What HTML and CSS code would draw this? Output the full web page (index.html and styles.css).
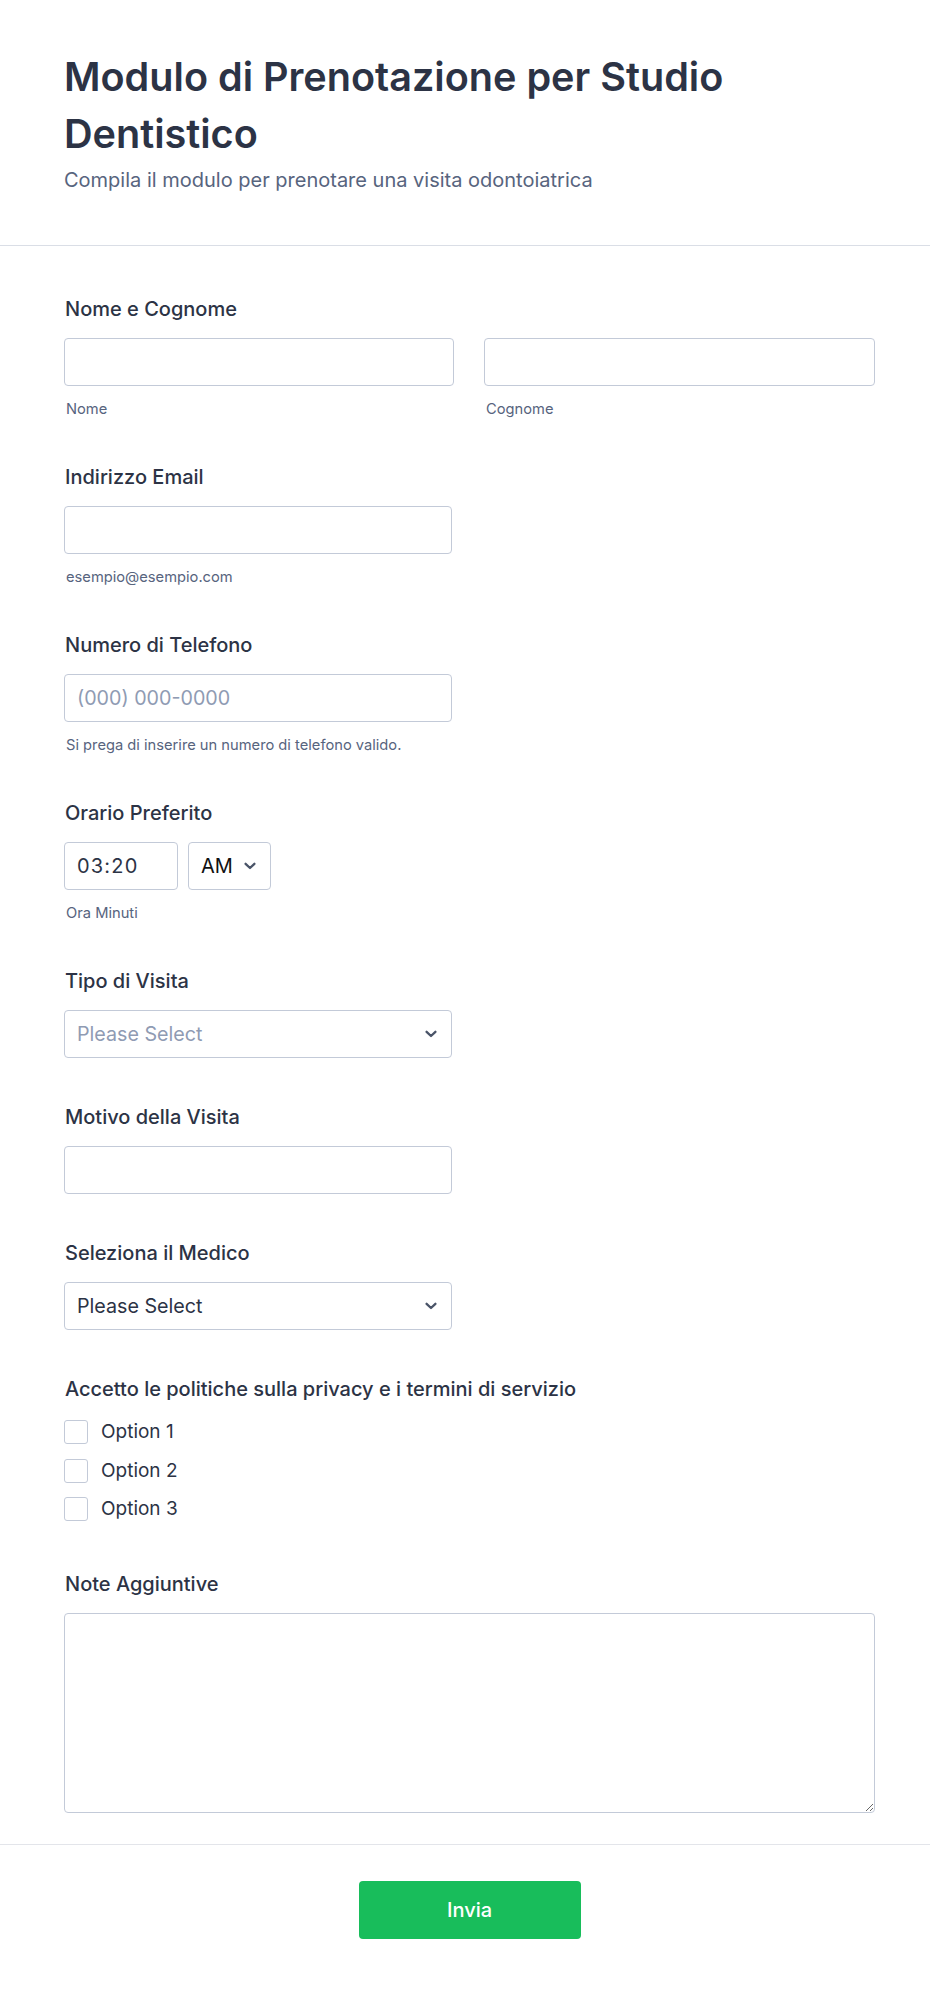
FILE: index.html
```html
<!DOCTYPE html>
<html lang="it">
<head>
<meta charset="utf-8">
<title>Modulo di Prenotazione per Studio Dentistico</title>
<link rel="stylesheet" href="styles.css">
</head>
<body>
<div class="form">
  <header class="form-header">
    <h1 class="form-title">Modulo di Prenotazione per Studio Dentistico</h1>
    <p class="form-subtitle">Compila il modulo per prenotare una visita odontoiatrica</p>
  </header>

  <main class="form-body">
    <div class="field">
      <label class="field-label">Nome e Cognome</label>
      <div class="name-row">
        <div class="sub">
          <input class="input" type="text">
          <span class="sublabel">Nome</span>
        </div>
        <div class="sub">
          <input class="input" type="text">
          <span class="sublabel">Cognome</span>
        </div>
      </div>
    </div>

    <div class="field">
      <label class="field-label">Indirizzo Email</label>
      <input class="input half" type="email">
      <span class="sublabel">esempio@esempio.com</span>
    </div>

    <div class="field">
      <label class="field-label">Numero di Telefono</label>
      <input class="input half" type="tel" placeholder="(000) 000-0000">
      <span class="sublabel">Si prega di inserire un numero di telefono valido.</span>
    </div>

    <div class="field">
      <label class="field-label">Orario Preferito</label>
      <div class="time-row">
        <div class="input time-box">03:20</div>
        <div class="input ampm-box">
          <span>AM</span>
          <svg class="chev" width="12" height="8" viewBox="0 0 12 8"><path d="M1.6 1.8 L6 6 L10.4 1.8" fill="none" stroke="#4a5468" stroke-width="2.3" stroke-linecap="round" stroke-linejoin="round"/></svg>
        </div>
      </div>
      <span class="sublabel">Ora Minuti</span>
    </div>

    <div class="field">
      <label class="field-label">Tipo di Visita</label>
      <div class="input half select">
        <span class="placeholder">Please Select</span>
        <svg class="chev" width="12" height="8" viewBox="0 0 12 8"><path d="M1.6 1.8 L6 6 L10.4 1.8" fill="none" stroke="#4a5468" stroke-width="2.3" stroke-linecap="round" stroke-linejoin="round"/></svg>
      </div>
    </div>

    <div class="field">
      <label class="field-label">Motivo della Visita</label>
      <input class="input half" type="text">
    </div>

    <div class="field">
      <label class="field-label">Seleziona il Medico</label>
      <div class="input half select">
        <span class="value">Please Select</span>
        <svg class="chev" width="12" height="8" viewBox="0 0 12 8"><path d="M1.6 1.8 L6 6 L10.4 1.8" fill="none" stroke="#4a5468" stroke-width="2.3" stroke-linecap="round" stroke-linejoin="round"/></svg>
      </div>
    </div>

    <div class="field field-options">
      <label class="field-label">Accetto le politiche sulla privacy e i termini di servizio</label>
      <div class="options">
        <div class="option"><span class="checkbox"></span><span>Option 1</span></div>
        <div class="option"><span class="checkbox"></span><span>Option 2</span></div>
        <div class="option"><span class="checkbox"></span><span>Option 3</span></div>
      </div>
    </div>

    <div class="field field-last">
      <label class="field-label">Note Aggiuntive</label>
      <textarea class="textarea"></textarea>
    </div>
  </main>

  <footer class="form-footer">
    <button class="submit" type="button">Invia</button>
  </footer>
</div>
</body>
</html>
```

FILE: styles.css
```css
* { box-sizing: border-box; }

html, body {
  margin: 0;
  padding: 0;
  background: #ffffff;
}

body {
  font-family: Inter, "Noto Sans", "Liberation Sans", sans-serif;
  color: #2c3345;
}

.form {
  width: 930px;
  min-height: 1991px;
  background: #ffffff;
}

.form-header {
  padding: 49px 55px 51px 64px;
  border-bottom: 1px solid #dadee6;
}

.form-title {
  margin: 0;
  font-size: 39.6px;
  line-height: 57px;
  font-weight: 600;
  color: #2c3345;
  letter-spacing: 0;
}

.form-subtitle {
  margin: 4px 0 0;
  font-size: 20px;
  line-height: 27px;
  color: #57647e;
}

.form-body {
  padding: 51px 55px 31px 64px;
  border-bottom: 1px solid #e3e5ea;
}

.field {
  display: flex;
  flex-direction: column;
  align-items: flex-start;
  margin-bottom: 47px;
}

.field-last { margin-bottom: 0; }

.field-label {
  display: block;
  font-size: 20px;
  line-height: 24px;
  font-weight: 500;
  color: #2c3345;
  margin-bottom: 17px;
  margin-left: 1px;
}

.name-row {
  display: grid;
  grid-template-columns: 390px 391px;
  column-gap: 30px;
  width: 811px;
}

.sub {
  display: flex;
  flex-direction: column;
}

.input {
  display: block;
  height: 48px;
  width: 100%;
  border: 1px solid #c3cad8;
  border-radius: 4px;
  background: #ffffff;
  font-family: inherit;
  font-size: 19.7px;
  color: #2c3345;
  padding: 0 12px;
  margin: 0;
  outline: none;
}

.input::placeholder { color: #8f9bb3; }

.half { width: 388px; }

.sublabel {
  display: block;
  margin-top: 15px;
  margin-left: 2px;
  font-size: 14.7px;
  line-height: 17px;
  color: #57647e;
}

.time-row {
  display: flex;
  gap: 10px;
}

.time-box {
  width: 114px;
  display: flex;
  align-items: center;
  padding: 0 12px;
  font-size: 20px;
  letter-spacing: 1.2px;
}

.ampm-box {
  width: 83px;
  display: flex;
  align-items: center;
  justify-content: space-between;
  padding: 0 14px 0 12px;
  font-size: 20px;
  color: #111111;
}

.select {
  display: flex;
  align-items: center;
  justify-content: space-between;
  padding: 0 13px 0 12px;
}

.select .chev { margin-right: 1px; }

.placeholder { color: #8f9bb3; }
.value { color: #2c3345; }

.chev { flex: none; }

.field-options { margin-bottom: 51px; }

.options {
  display: flex;
  flex-direction: column;
  gap: 14.5px;
  margin-top: 2px;
}

.option {
  display: flex;
  align-items: center;
  gap: 13px;
  font-size: 19px;
  line-height: 24px;
  color: #2c3345;
}

.checkbox {
  width: 24px;
  height: 24px;
  border: 1px solid #c3cad8;
  border-radius: 3px;
  background: #ffffff;
  flex: none;
}

.textarea {
  display: block;
  width: 811px;
  height: 200px;
  border: 1px solid #c3cad8;
  border-radius: 4px;
  font-family: inherit;
  font-size: 18px;
  padding: 10px 13px;
  resize: vertical;
  outline: none;
}

.form-footer {
  display: flex;
  justify-content: center;
  padding: 36px 55px 50px 64px;
}

.submit {
  width: 222px;
  height: 58px;
  border: none;
  border-radius: 4px;
  background: #18bd5b;
  color: #ffffff;
  font-family: inherit;
  font-size: 20px;
  font-weight: 500;
  cursor: pointer;
}
```
